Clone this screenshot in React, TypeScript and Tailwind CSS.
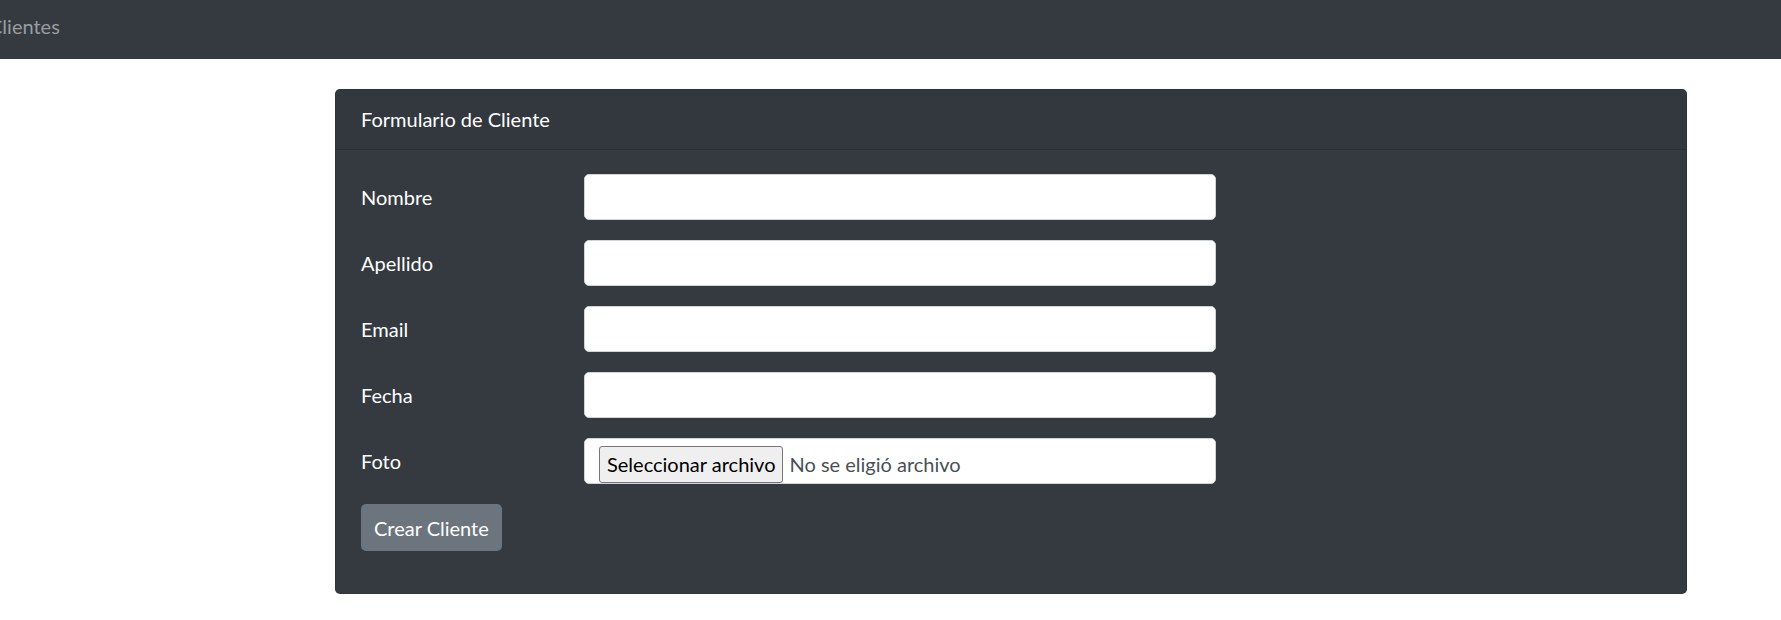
import React from "react";

const campos = ["Nombre", "Apellido", "Email", "Fecha"];

const Fila: React.FC<{ label: string; children: React.ReactNode }> = ({ label, children }) => (
  <div className="mb-[20px] flex items-center">
    <label className="w-[223px] text-[20px] leading-[30px] text-white">{label}</label>
    {children}
  </div>
);

const App: React.FC = () => (
  <div className="min-h-screen bg-white font-['Lato','Open_Sans',sans-serif]">
    <nav className="flex h-[59px] items-start overflow-hidden bg-[#343a40] pt-[11px]">
      <span className="ml-[-11px] text-[20px] leading-[30px] text-[#9a9da0]">Clientes</span>
    </nav>

    <div className="pl-[335px] pt-[30px]">
      <div className="w-[1352px] rounded-[5px] border border-black/[.125] bg-[#343a40] text-white">
        <div className="flex h-[60px] items-center border-b border-black/[.125] bg-black/[.03] px-[25px] pb-[2px] text-[20px]">
          Formulario de Cliente
        </div>
        <div className="px-[25px] pb-[42px] pt-[24px]">
          {campos.map((c) => (
            <Fila key={c} label={c}>
              <input
                type="text"
                className="h-[46px] w-[632px] rounded-[5px] border border-[#ced4da] bg-white px-[15px] text-[20px] text-[#495057] outline-none"
              />
            </Fila>
          ))}
          <Fila label="Foto">
            <div className="flex h-[46px] w-[632px] items-start rounded-[5px] border border-[#ced4da] bg-white pl-[14px] pt-[7px]">
              <button className="h-[37px] rounded-[3px] border border-[#767676] bg-[#efefef] px-[7px] text-[20px] leading-[35px] text-black">
                Seleccionar archivo
              </button>
              <span className="ml-[6px] text-[20px] leading-[37px] text-[#495057]">No se eligió archivo</span>
            </div>
          </Fila>
          <button className="h-[47px] rounded-[5px] bg-[#6c757d] px-[13px] text-[20px] leading-[30px] text-white">
            Crear Cliente
          </button>
        </div>
      </div>
    </div>
  </div>
);

export default App;
